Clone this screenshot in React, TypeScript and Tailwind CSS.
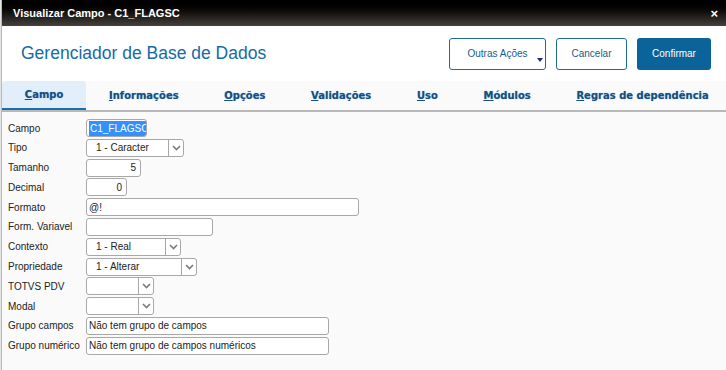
import React from "react";

const tabs = [
  { key: "C", rest: "ampo", active: true },
  { key: "I", rest: "nformações" },
  { key: "O", rest: "pções" },
  { key: "V", rest: "alidações" },
  { key: "U", rest: "so" },
  { key: "M", rest: "ódulos" },
  { key: "R", rest: "egras de dependência" },
];

function Chevron() {
  return (
    <svg width="9" height="6" viewBox="0 0 9 6" fill="none">
      <path d="M1 1l3.5 3.5L8 1" stroke="#7a7a7a" strokeWidth="1.6" />
    </svg>
  );
}

function Box({ w, children, align = "left" }: { w: number; children?: React.ReactNode; align?: "left" | "right" }) {
  return (
    <div
      className={`flex h-[18px] items-center overflow-hidden rounded-[3px] border border-[#a8a8a8] bg-white ${align === "right" ? "justify-end pr-[4px]" : "pl-[2px]"}`}
      style={{ width: w }}
    >
      {children}
    </div>
  );
}

function Select({ w, value }: { w: number; value?: string }) {
  return (
    <div className="flex h-[18px] overflow-hidden rounded-[3px] border border-[#a8a8a8] bg-white" style={{ width: w }}>
      <div className="flex flex-1 items-center pl-[9px]">{value}</div>
      <div className="flex w-[15px] items-center justify-center border-l border-[#a8a8a8]">
        <Chevron />
      </div>
    </div>
  );
}

function Row({ label, children }: { label: string; children: React.ReactNode }) {
  return (
    <div className="flex h-[18px] items-center">
      <div className="w-[78px] text-[#222]">{label}</div>
      {children}
    </div>
  );
}

export default function App() {
  return (
    <div className="flex h-[370px] w-[726px] overflow-hidden bg-[#fafafa] font-['Liberation_Sans',Arial,sans-serif]">
      <div className="w-[2px] shrink-0 border-r border-[#b9b9b9] bg-[#e4e4e4]" />
      <div className="flex min-w-0 flex-1 flex-col">
        <div className="flex h-[26px] items-center justify-between bg-gradient-to-b from-[#000] to-[#46413c] pl-[11px] pr-[8px] text-[11px] font-bold text-white">
          <span>Visualizar Campo - C1_FLAGSC</span>
          <span className="text-[13px] leading-none">×</span>
        </div>

        <div className="flex h-[55px] items-center justify-between bg-white pl-[19px] pr-[15px]">
          <h1 className="text-[17.5px] text-[#146ba6]">Gerenciador de Base de Dados</h1>
          <div className="flex gap-[10px] text-[10px]">
            <button className="relative h-[32px] w-[97px] rounded-[3px] border border-[#1f6a9c] bg-white text-[#1b5b8b]">
              Outras Ações
              <span className="absolute bottom-[7px] right-[2px] h-0 w-0 border-x-[3px] border-t-[4px] border-x-transparent border-t-[#1c2a86]" />
            </button>
            <button className="h-[32px] w-[71px] rounded-[3px] border border-[#1f6a9c] bg-white text-[#1b5b8b]">Cancelar</button>
            <button className="h-[32px] w-[74px] rounded-[3px] bg-[#0b6499] text-white">Confirmar</button>
          </div>
        </div>

        <div className="flex h-[31px] overflow-hidden border-b-2 border-[#b8b8b8] font-['DejaVu_Sans',Verdana,sans-serif] text-[10px] font-bold text-[#1a4d7a] [text-shadow:0_0_1px_#6bb3e6]">
          {tabs.map((t) => (
            <div
              key={t.key}
              className={`flex shrink-0 items-center whitespace-nowrap px-[22.8px] ${t.active ? "rounded-t-[4px] border-b-2 border-[#1b6ea8] bg-[#e2eef9]" : ""}`}
            >
              <span>
                <span className="underline">{t.key}</span>
                {t.rest}
              </span>
            </div>
          ))}
        </div>

        <div className="flex flex-col gap-[1.8px] pl-[6px] pt-[7px] text-[10px] text-[#222]">
          <Row label="Campo">
            <Box w={61}>
              <span className="bg-[#3390ff] px-[1px] whitespace-nowrap text-white">C1_FLAGSC</span>
            </Box>
          </Row>
          <Row label="Tipo">
            <Select w={98} value="1 - Caracter" />
          </Row>
          <Row label="Tamanho">
            <Box w={55} align="right">5</Box>
          </Row>
          <Row label="Decimal">
            <Box w={41} align="right">0</Box>
          </Row>
          <Row label="Formato">
            <Box w={273}>@!</Box>
          </Row>
          <Row label="Form. Variavel">
            <Box w={127} />
          </Row>
          <Row label="Contexto">
            <Select w={95} value="1 - Real" />
          </Row>
          <Row label="Propriedade">
            <Select w={111} value="1 - Alterar" />
          </Row>
          <Row label="TOTVS PDV">
            <Select w={68} />
          </Row>
          <Row label="Modal">
            <Select w={68} />
          </Row>
          <Row label="Grupo campos">
            <Box w={243}>Não tem grupo de campos</Box>
          </Row>
          <Row label="Grupo numérico">
            <Box w={243}>Não tem grupo de campos numéricos</Box>
          </Row>
        </div>
      </div>
    </div>
  );
}
